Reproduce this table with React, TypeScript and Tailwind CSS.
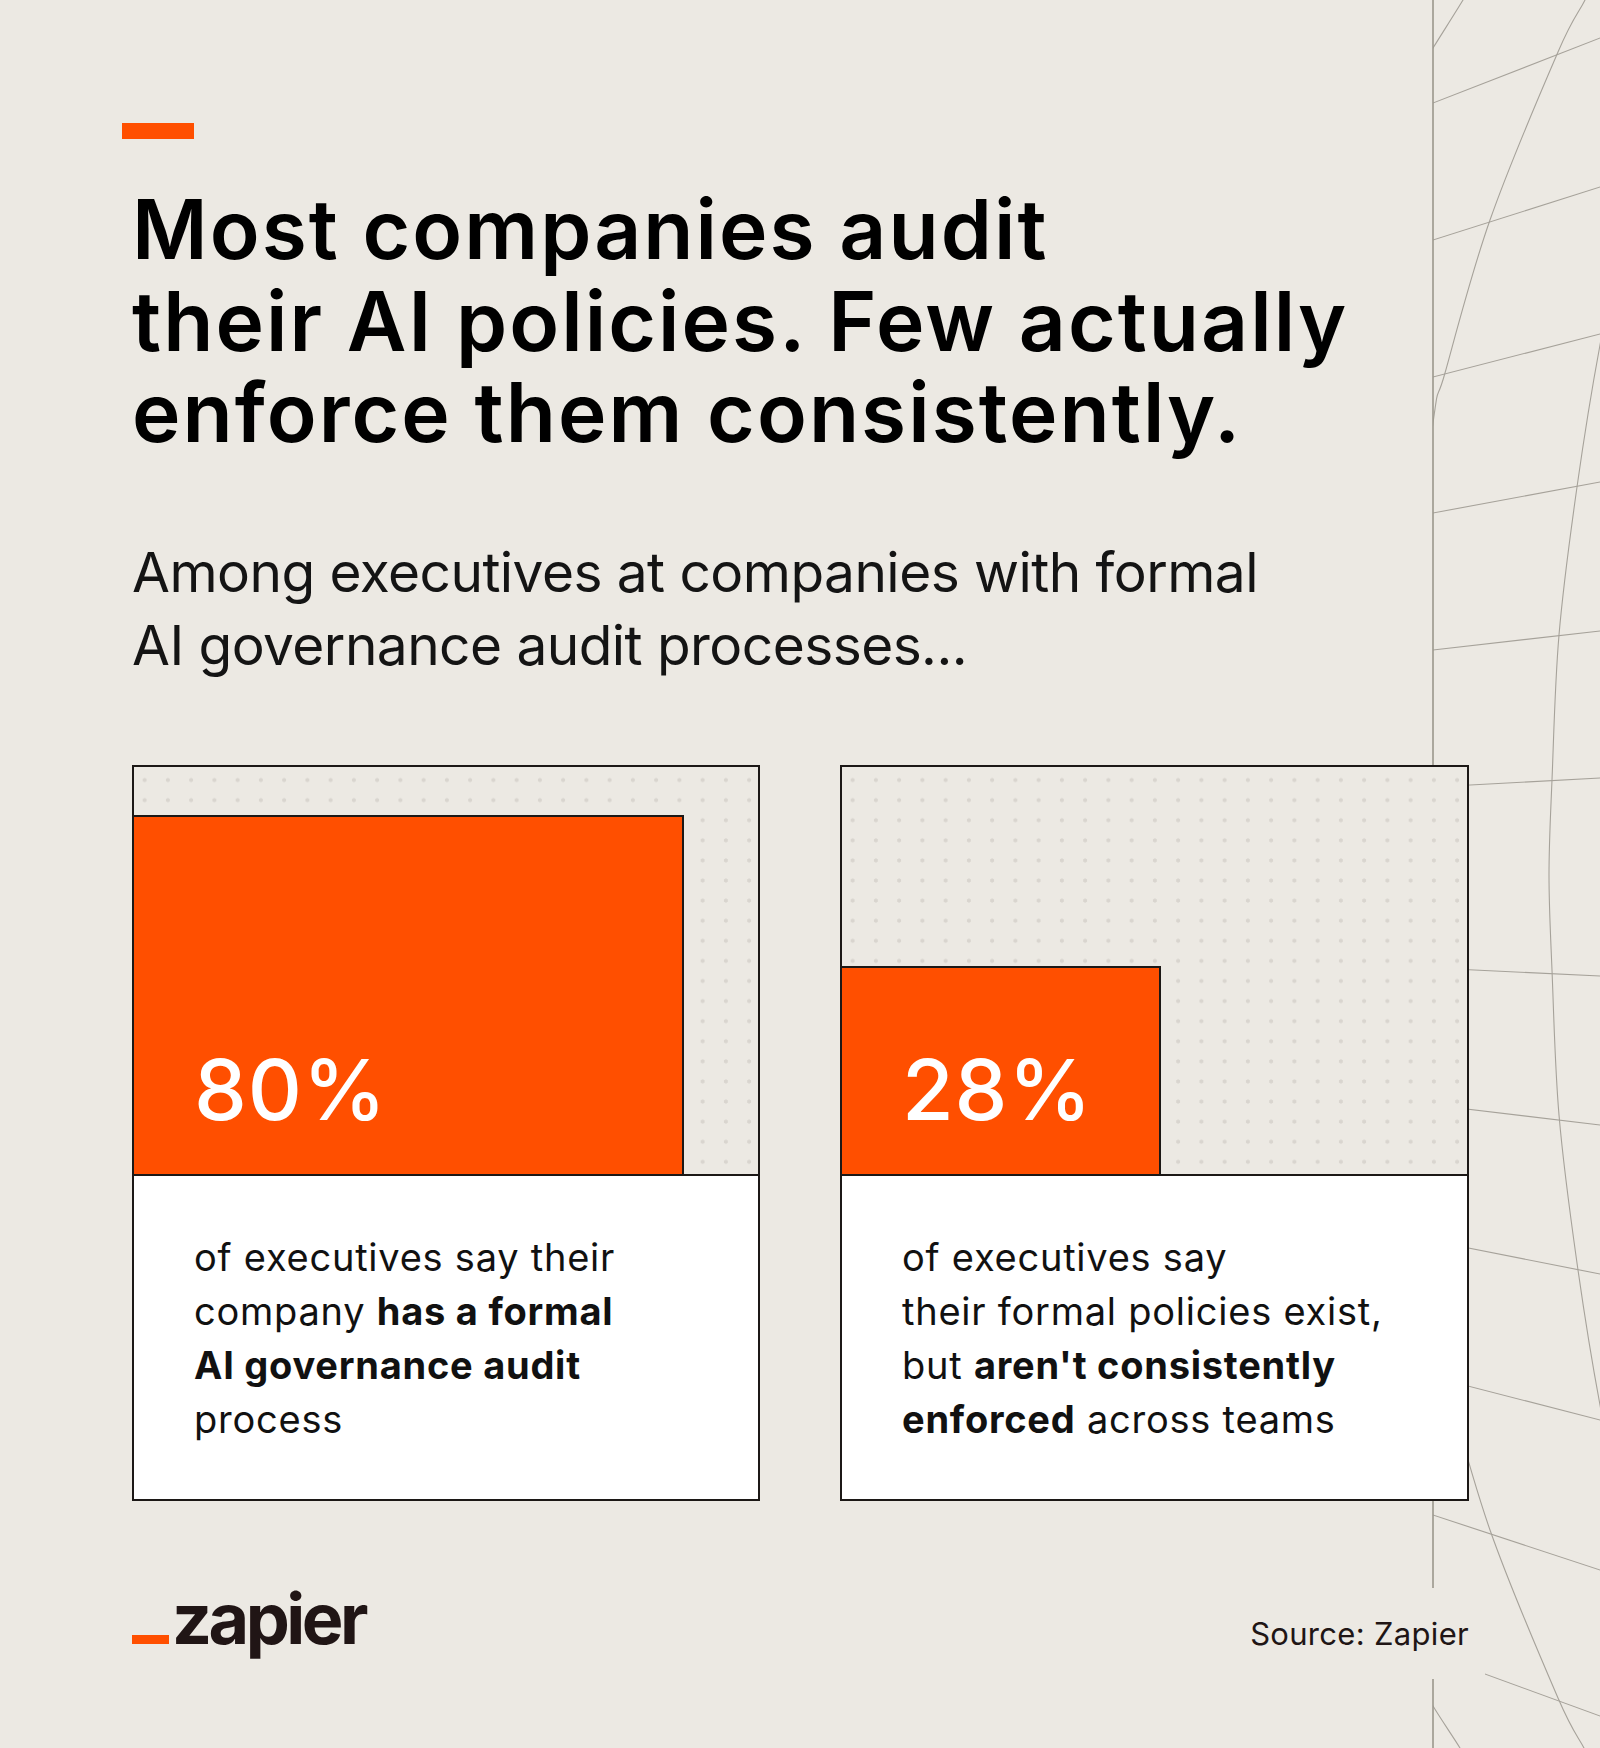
import React from 'react';

type Pt = [number, number];

// catmull-rom -> cubic bezier, for the globe lines on the right
function smooth(pts: Pt[]) {
  let d = `M${pts[0][0]},${pts[0][1]}`;
  for (let i = 0; i < pts.length - 1; i++) {
    const p0 = pts[i - 1] || pts[i];
    const p1 = pts[i];
    const p2 = pts[i + 1];
    const p3 = pts[i + 2] || p2;
    const c1x = p1[0] + (p2[0] - p0[0]) / 6;
    const c1y = p1[1] + (p2[1] - p0[1]) / 6;
    const c2x = p2[0] - (p3[0] - p1[0]) / 6;
    const c2y = p2[1] - (p3[1] - p1[1]) / 6;
    d += ` C${c1x},${c1y} ${c2x},${c2y} ${p2[0]},${p2[1]}`;
  }
  return d;
}

const meridians: Pt[][] = [
  [[1480, -30], [1463, 0], [1433, 48], [1415, 78]],
  [[1415, 1672], [1433, 1706], [1460, 1748], [1477, 1778]],
  [
    [1598, -30], [1585, 0], [1558, 52], [1490, 220], [1445, 373], [1433, 423], [1406, 650],
    [1399, 875], [1406, 1100], [1433, 1327], [1445, 1377], [1490, 1530], [1558, 1698], [1585, 1750], [1598, 1780],
  ],
  [
    [1625, 230], [1600, 345], [1577, 487], [1559, 635], [1552, 780], [1549, 875],
    [1552, 970], [1559, 1115], [1577, 1263], [1600, 1405], [1625, 1520],
  ],
];

// y at x=1433 and at x=1600
const latitudes: Pt[] = [
  [103, 38], [240, 187], [377, 334], [513, 482], [650, 631], [787, 778],
  [968, 976], [1105, 1125], [1241, 1274], [1377, 1420], [1515, 1570], [1655, 1716],
];

function Globe() {
  return (
    <svg className="absolute inset-0 pointer-events-none" width={1600} height={1748} viewBox="0 0 1600 1748">
      <defs>
        <clipPath id="right-side">
          <rect x={1433} y={0} width={200} height={1748} />
        </clipPath>
      </defs>
      <g clipPath="url(#right-side)" fill="none" stroke="#a6a29a" strokeWidth={1.1}>
        {meridians.map((m, i) => (
          <path key={i} d={smooth(m)} />
        ))}
        {latitudes.map(([yl, yr], i) => {
          const s = (yr - yl) / 167;
          return <line key={i} x1={1420} y1={yl - 13 * s} x2={1610} y2={yr + 10 * s} />;
        })}
      </g>
      <line x1={1433} y1={0} x2={1433} y2={1748} stroke="#9b978c" strokeWidth={1.6} />
    </svg>
  );
}

function StatCard({
  value,
  barW,
  barH,
  children,
}: {
  value: string;
  barW: string;
  barH: string;
  children: React.ReactNode;
}) {
  return (
    <div className="relative z-10 border-2 border-[#1c1816] flex flex-col">
      <div className="h-[407px] flex items-end bg-[#ECE9E3] bg-[radial-gradient(circle,#d9d5cf_1.7px,transparent_2.3px)] bg-[size:23.25px_20.1px] bg-[position:-1px_3px]">
        <div className={`${barW} ${barH} bg-[#FF4F00] border-t-2 border-r-2 border-[#1c1816] flex items-end pl-[60px] pb-[42px]`}>
          <span className="text-white text-[84px] leading-none font-medium tracking-[0.01em]">{value}</span>
        </div>
      </div>
      <div className="h-[325px] border-t-2 border-[#1c1816] bg-white flex items-center pl-[60px]">
        <p className="text-[38px] leading-[54px] tracking-[0.02em] text-[#111111]">{children}</p>
      </div>
    </div>
  );
}

export default function App() {
  return (
    <div className="relative w-[1600px] h-[1748px] overflow-hidden bg-[#ECE9E3] font-[Inter,sans-serif] text-black">
      <Globe />

      <div className="relative w-[1469px] pl-[132px] pt-[123px]">
        <div className="w-[72px] h-[16px] -ml-[10px] bg-[#FF4F00]" />

        <h1 className="mt-[45px] text-[82px] leading-[91.5px] font-semibold tracking-[0.025em]">
          Most companies audit
          <br />
          their AI policies. Few actually
          <br />
          enforce them consistently.
        </h1>

        <p className="mt-[77px] text-[55px] leading-[73.3px] tracking-[-0.01em] text-[#141414]">
          Among executives at companies with formal
          <br />
          AI governance audit processes...
        </p>

        <div className="mt-[83px] grid grid-cols-[628px_629px] gap-[80px]">
          <StatCard value="80%" barW="w-[550px]" barH="h-[359px]">
            of executives say their
            <br />
            company <span className="font-bold">has a formal</span>
            <br />
            <span className="font-bold">AI governance audit</span>
            <br />
            process
          </StatCard>
          <StatCard value="28%" barW="w-[319px]" barH="h-[208px]">
            of executives say
            <br />
            their formal policies exist,
            <br />
            but <span className="font-bold">aren't consistently</span>
            <br />
            <span className="font-bold">enforced</span> across teams
          </StatCard>
        </div>

        <div className="mt-[87px] flex items-start justify-between">
          <div className="-mt-[4px] text-[70px] leading-none font-bold tracking-[-0.05em] text-[#201515]">
            <span className="inline-block w-[37px] h-[9px] mr-[3px] bg-[#FF4F00]" />
            zapier
          </div>
          <div className="relative z-10 -mr-[16px] py-[30px] pl-[16px] pr-[16px] bg-[#ECE9E3] text-[31px] leading-[31px] tracking-[0.01em] text-[#201515]">
            Source: Zapier
          </div>
        </div>
      </div>
    </div>
  );
}
